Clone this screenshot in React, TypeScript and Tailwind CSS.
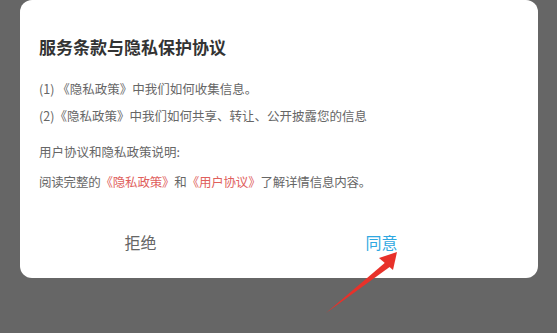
import React from "react";

export default function App() {
  return (
    <div
      className="relative w-[557px] h-[333px] overflow-hidden bg-[#666666]"
      style={{ fontFamily: '"Noto Sans CJK SC", "Noto Sans", sans-serif' }}
    >
      <div className="ml-[20px] w-[518px] h-[278px] bg-white rounded-[12px] flex flex-col pt-[35px] pl-[19px]">
        <div className="text-[17px] leading-[24px] font-bold text-[#333333]">
          服务条款与隐私保护协议
        </div>
        <div className="mt-[16px] text-[12.5px] leading-[27px] text-[#666666]">
          <div>(1) 《隐私政策》中我们如何收集信息。</div>
          <div>(2)《隐私政策》中我们如何共享、转让、公开披露您的信息</div>
          <div className="mt-[9px]">用户协议和隐私政策说明:</div>
          <div className="mt-[3px] tracking-[-0.2px]">
            阅读完整的<span className="text-[#e0605c]">《隐私政策》</span>和
            <span className="text-[#e0605c]">《用户协议》</span>了解详情信息内容。
          </div>
        </div>
        <div className="mt-[23px] flex ml-[-19px] pr-[36px] h-[48px] items-center">
          <div className="flex-1 text-center text-[16px] text-[#666666]">拒绝</div>
          <div className="flex-1 text-center text-[16px] text-[#2fa8e1]">同意</div>
        </div>
      </div>
      <svg
        className="absolute left-0 top-0"
        width="557"
        height="333"
        viewBox="0 0 557 333"
      >
        <polygon points="326,313 387,261 391,266" fill="#e8312a" />
        <polygon points="397,252 393,270 379,258" fill="#e8312a" />
      </svg>
    </div>
  );
}
